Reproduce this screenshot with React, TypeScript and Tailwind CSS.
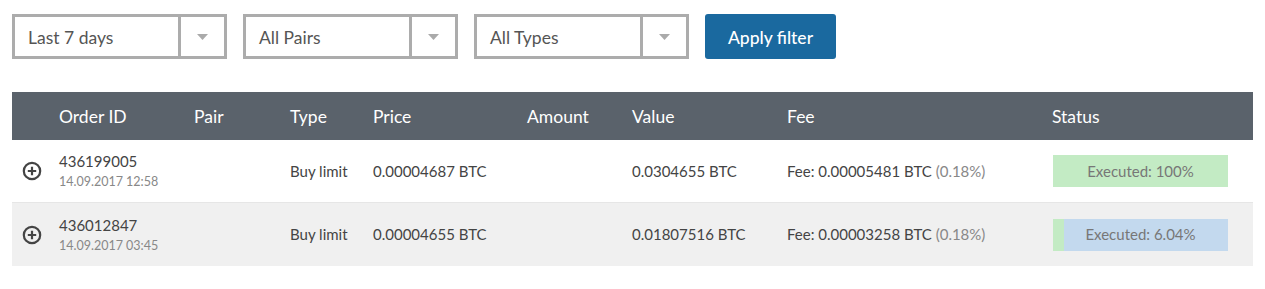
import React from 'react';

const cols = 'grid grid-cols-[47px_135px_96px_83px_154px_105px_155px_265px_1fr]';

function Select({ label }: { label: string }) {
  return (
    <div className="flex h-[45px] w-[215px] border-[3px] border-[#acacac] bg-white">
      <div className="flex flex-1 items-center pl-[13px] pt-1 text-[17.5px] text-[#555]">{label}</div>
      <div className="flex w-[46px] items-center justify-center border-l-[3px] border-[#acacac]">
        <svg width="11" height="6" viewBox="0 0 11 6">
          <path d="M0 0h11L5.5 6z" fill="#aaa" />
        </svg>
      </div>
    </div>
  );
}

function PlusIcon() {
  return (
    <svg width="20" height="20" viewBox="0 0 20 20">
      <circle cx="10" cy="10" r="8.2" fill="none" stroke="#444" strokeWidth="2.2" />
      <path d="M10 5.8v8.4M5.8 10h8.4" stroke="#444" strokeWidth="2.2" />
    </svg>
  );
}

type Order = {
  id: string;
  date: string;
  price: string;
  value: string;
  fee: string;
  executed: number;
};

const orders: Order[] = [
  { id: '436199005', date: '14.09.2017 12:58', price: '0.00004687 BTC', value: '0.0304655 BTC', fee: '0.00005481 BTC', executed: 100 },
  { id: '436012847', date: '14.09.2017 03:45', price: '0.00004655 BTC', value: '0.01807516 BTC', fee: '0.00003258 BTC', executed: 6.04 },
];

export default function App() {
  return (
    <div className="min-h-[289px] bg-white px-3 pt-[14px] font-['Lato','Noto_Sans',sans-serif]">
      {/* Filters */}
      <div className="flex gap-4">
        <Select label="Last 7 days" />
        <Select label="All Pairs" />
        <Select label="All Types" />
        <button className="h-[45px] w-[131px] rounded-[3px] bg-[#1a699f] pt-1 text-[17.5px] font-medium text-white">
          Apply filter
        </button>
      </div>

      {/* Table */}
      <div className="mt-[33px] w-[1241px]">
        <div className={`${cols} h-12 items-center bg-[#5a626b] pt-[2px] text-[17.5px] text-white`}>
          <div />
          <div>Order ID</div>
          <div>Pair</div>
          <div>Type</div>
          <div>Price</div>
          <div>Amount</div>
          <div>Value</div>
          <div>Fee</div>
          <div>Status</div>
        </div>

        {orders.map((o, i) => (
          <div
            key={o.id}
            className={`${cols} h-[63px] items-center text-[15px] text-[#444] ${
              i % 2 === 0 ? 'border-b border-[#e6e6e6] bg-white' : 'bg-[#f0f0f0]'
            }`}
          >
            <div className="flex pl-[10px]">
              <PlusIcon />
            </div>
            <div className="flex flex-col">
              <span className="text-[15px] leading-[20px]">{o.id}</span>
              <span className="mt-[2px] text-[12.5px] leading-[18px] text-[#888]">{o.date}</span>
            </div>
            <div />
            <div>Buy limit</div>
            <div>{o.price}</div>
            <div />
            <div>{o.value}</div>
            <div>
              Fee: {o.fee} <span className="text-[#888]">(0.18%)</span>
            </div>
            <div className="pl-px">
              <div className="relative flex h-8 w-[175px] items-center justify-center bg-[#c3d9ee] text-[#777]">
                <div
                  className="absolute inset-y-0 left-0 bg-[#c3ebc4]"
                  style={{ width: `${o.executed}%` }}
                />
                <span className="relative">Executed: {o.executed}%</span>
              </div>
            </div>
          </div>
        ))}
      </div>
    </div>
  );
}
